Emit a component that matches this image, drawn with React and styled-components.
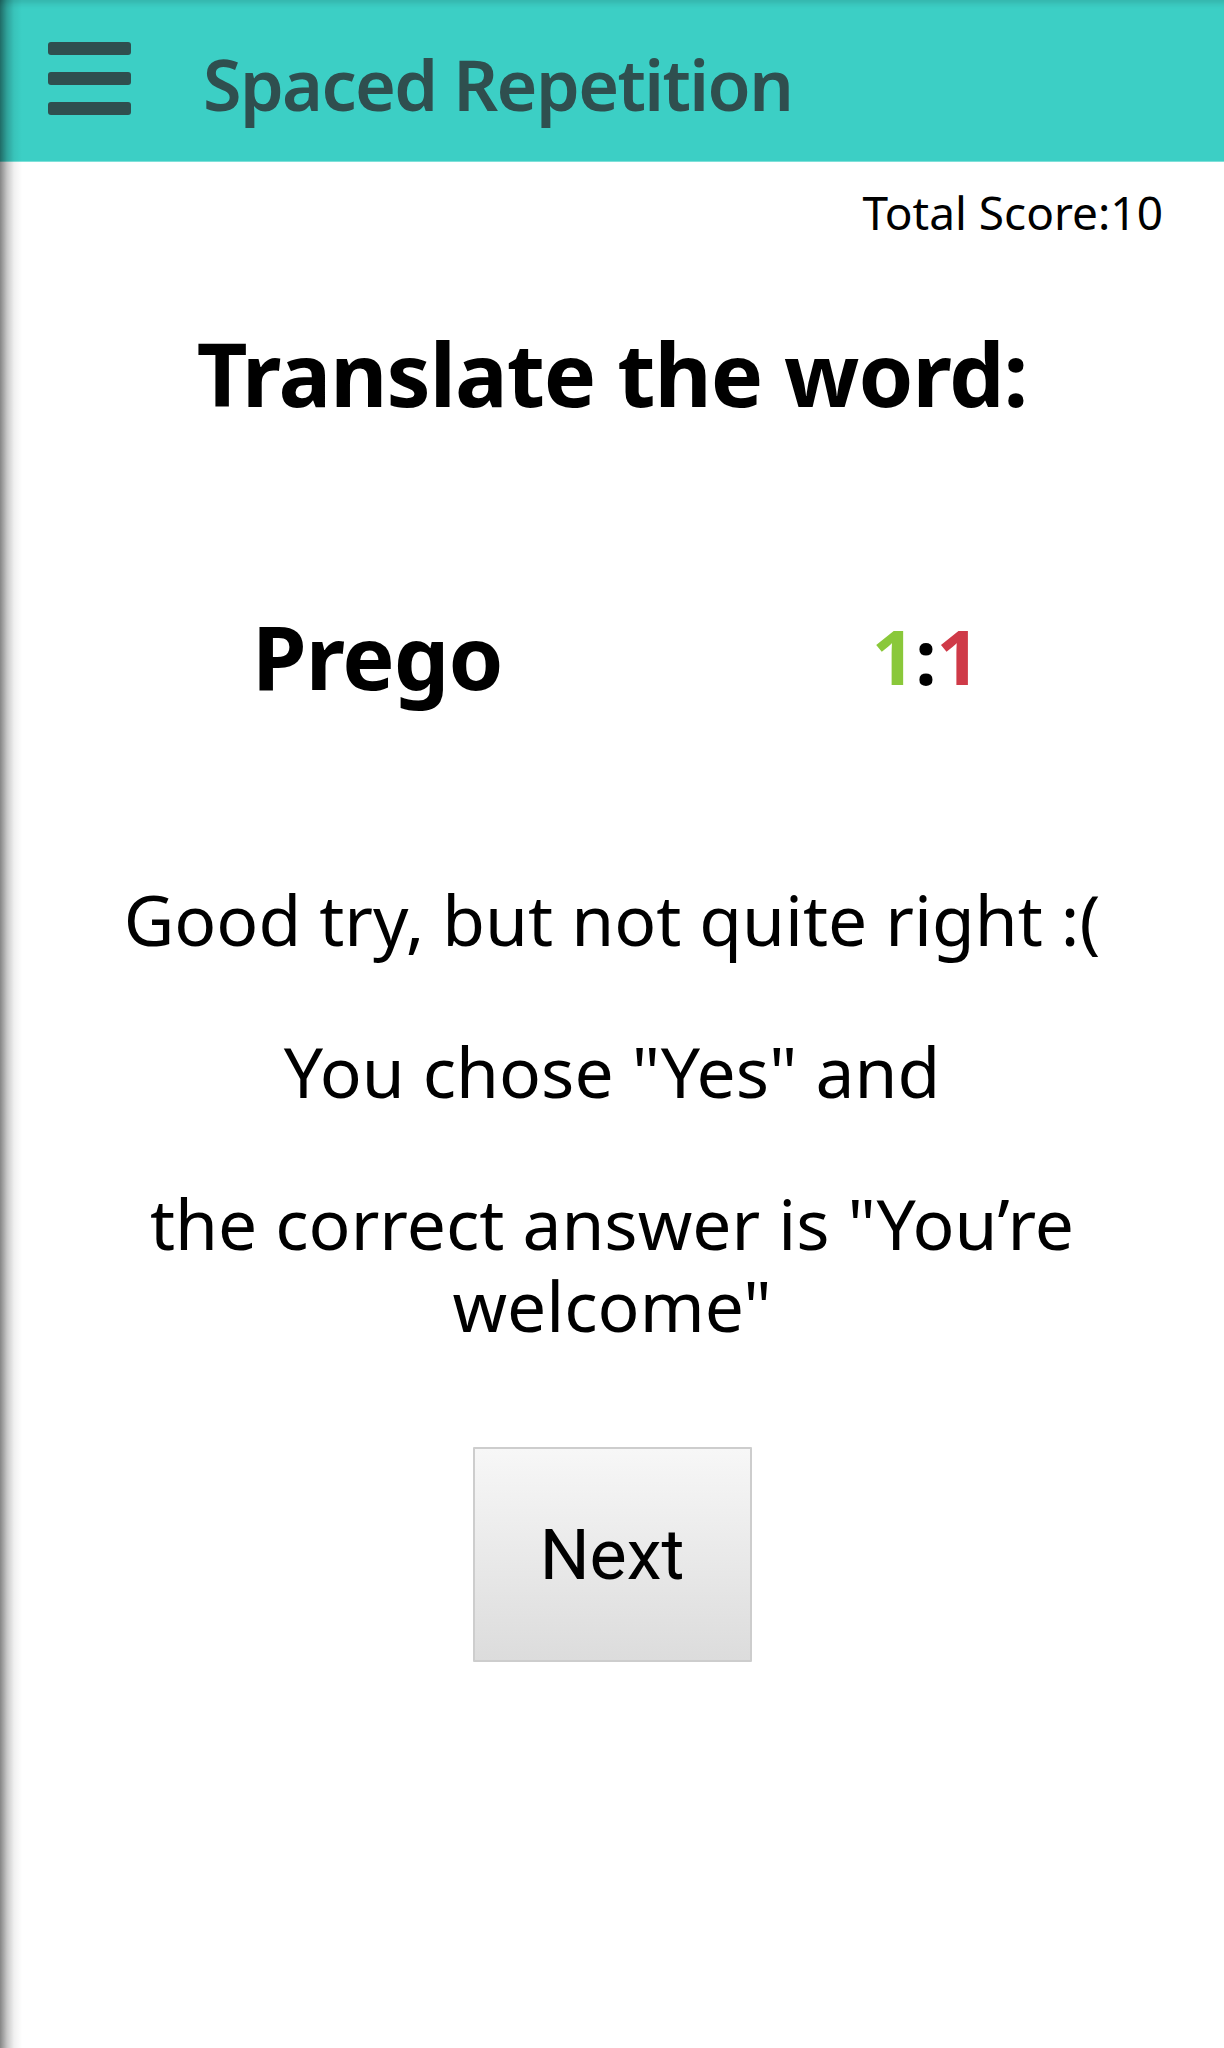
import styled, { createGlobalStyle } from 'styled-components'

const GlobalStyle = createGlobalStyle`
    html, body {
        margin: 0;
        padding: 0;
        background: #ffffff;
    }
    body {
        font-family: "Noto Sans", "Open Sans", sans-serif;
        color: #000;
    }
`

const Page = styled.div`
    position: relative;
    min-height: 2048px;
    background: #fff;

    &::before {
        content: '';
        position: absolute;
        top: 0;
        left: 0;
        bottom: 0;
        width: 22px;
        z-index: 2;
        pointer-events: none;
        background: linear-gradient(
            to right,
            rgba(0, 0, 0, 0.48),
            rgba(0, 0, 0, 0.22) 7px,
            rgba(0, 0, 0, 0.06) 14px,
            rgba(0, 0, 0, 0) 22px
        );
    }
`

const Header = styled.header`
    display: flex;
    align-items: center;
    height: 162px;
    box-sizing: border-box;
    padding-left: 48px;
    background: #3ccfc5;
    border-bottom: 1px solid #7ee0d9;
    box-shadow: inset 0 8px 6px -5px rgba(0, 0, 0, 0.14);
`

const MenuButton = styled.div`
    display: flex;
    flex-direction: column;
    gap: 17px;
    width: 83px;
    margin-bottom: 5px;
`

const MenuBar = styled.span`
    display: block;
    height: 13px;
    border-radius: 3px;
    background: #2f4f4f;
`

const Title = styled.h1`
    margin: 6px 0 0 72px;
    font-size: 70px;
    line-height: 1;
    font-weight: 600;
    color: #2f4f4f;
    letter-spacing: -1.6px;
`

const ScoreRow = styled.div`
    margin-top: 27px;
    padding-right: 61px;
    text-align: right;
    font-size: 46px;
    line-height: 1;
`

const Heading = styled.h2`
    margin: 94px 0 0;
    text-align: center;
    font-size: 88px;
    line-height: 1;
    font-weight: 700;
    letter-spacing: -1px;
`

const WordRow = styled.div`
    display: flex;
    justify-content: space-between;
    align-items: center;
    margin-top: 195px;
    padding: 0 244px 0 252px;
`

const Word = styled.div`
    font-size: 88px;
    line-height: 1;
    font-weight: 700;
    letter-spacing: -1px;
`

const Ratio = styled.div`
    font-size: 76px;
    line-height: 1;
    font-weight: 700;
`

const Count = styled.span`
    color: ${p => p.$tone === 'good' ? '#8ac83a' : '#cf3a48'};
`

const Feedback = styled.div`
    display: flex;
    flex-direction: column;
    gap: 70px;
    margin-top: 178px;
    padding: 0 40px;
    text-align: center;
`

const Line = styled.p`
    margin: 0;
    font-size: 69.5px;
    line-height: 82px;
    font-weight: 400;
`

const Actions = styled.div`
    display: flex;
    justify-content: center;
    margin-top: 101px;
`

const NextButton = styled.button`
    width: 279px;
    height: 215px;
    border: 2px solid #cdcdcd;
    border-radius: 1px;
    background: linear-gradient(to bottom, #f7f7f7, #dcdcdc);
    font-family: Roboto, "Noto Sans", sans-serif;
    font-size: 70px;
    color: #000;
    padding: 0;
`

function App() {
    return (
        <Page>
            <GlobalStyle />
            <Header>
                <MenuButton>
                    <MenuBar />
                    <MenuBar />
                    <MenuBar />
                </MenuButton>
                <Title>Spaced Repetition</Title>
            </Header>
            <ScoreRow>Total Score:10</ScoreRow>
            <Heading>Translate the word:</Heading>
            <WordRow>
                <Word>Prego</Word>
                <Ratio>
                    <Count $tone='good'>1</Count>:<Count $tone='bad'>1</Count>
                </Ratio>
            </WordRow>
            <Feedback>
                <Line>Good try, but not quite right :(</Line>
                <Line>You chose "Yes" and</Line>
                <Line>the correct answer is "You’re welcome"</Line>
            </Feedback>
            <Actions>
                <NextButton>Next</NextButton>
            </Actions>
        </Page>
    )
}

export default App
